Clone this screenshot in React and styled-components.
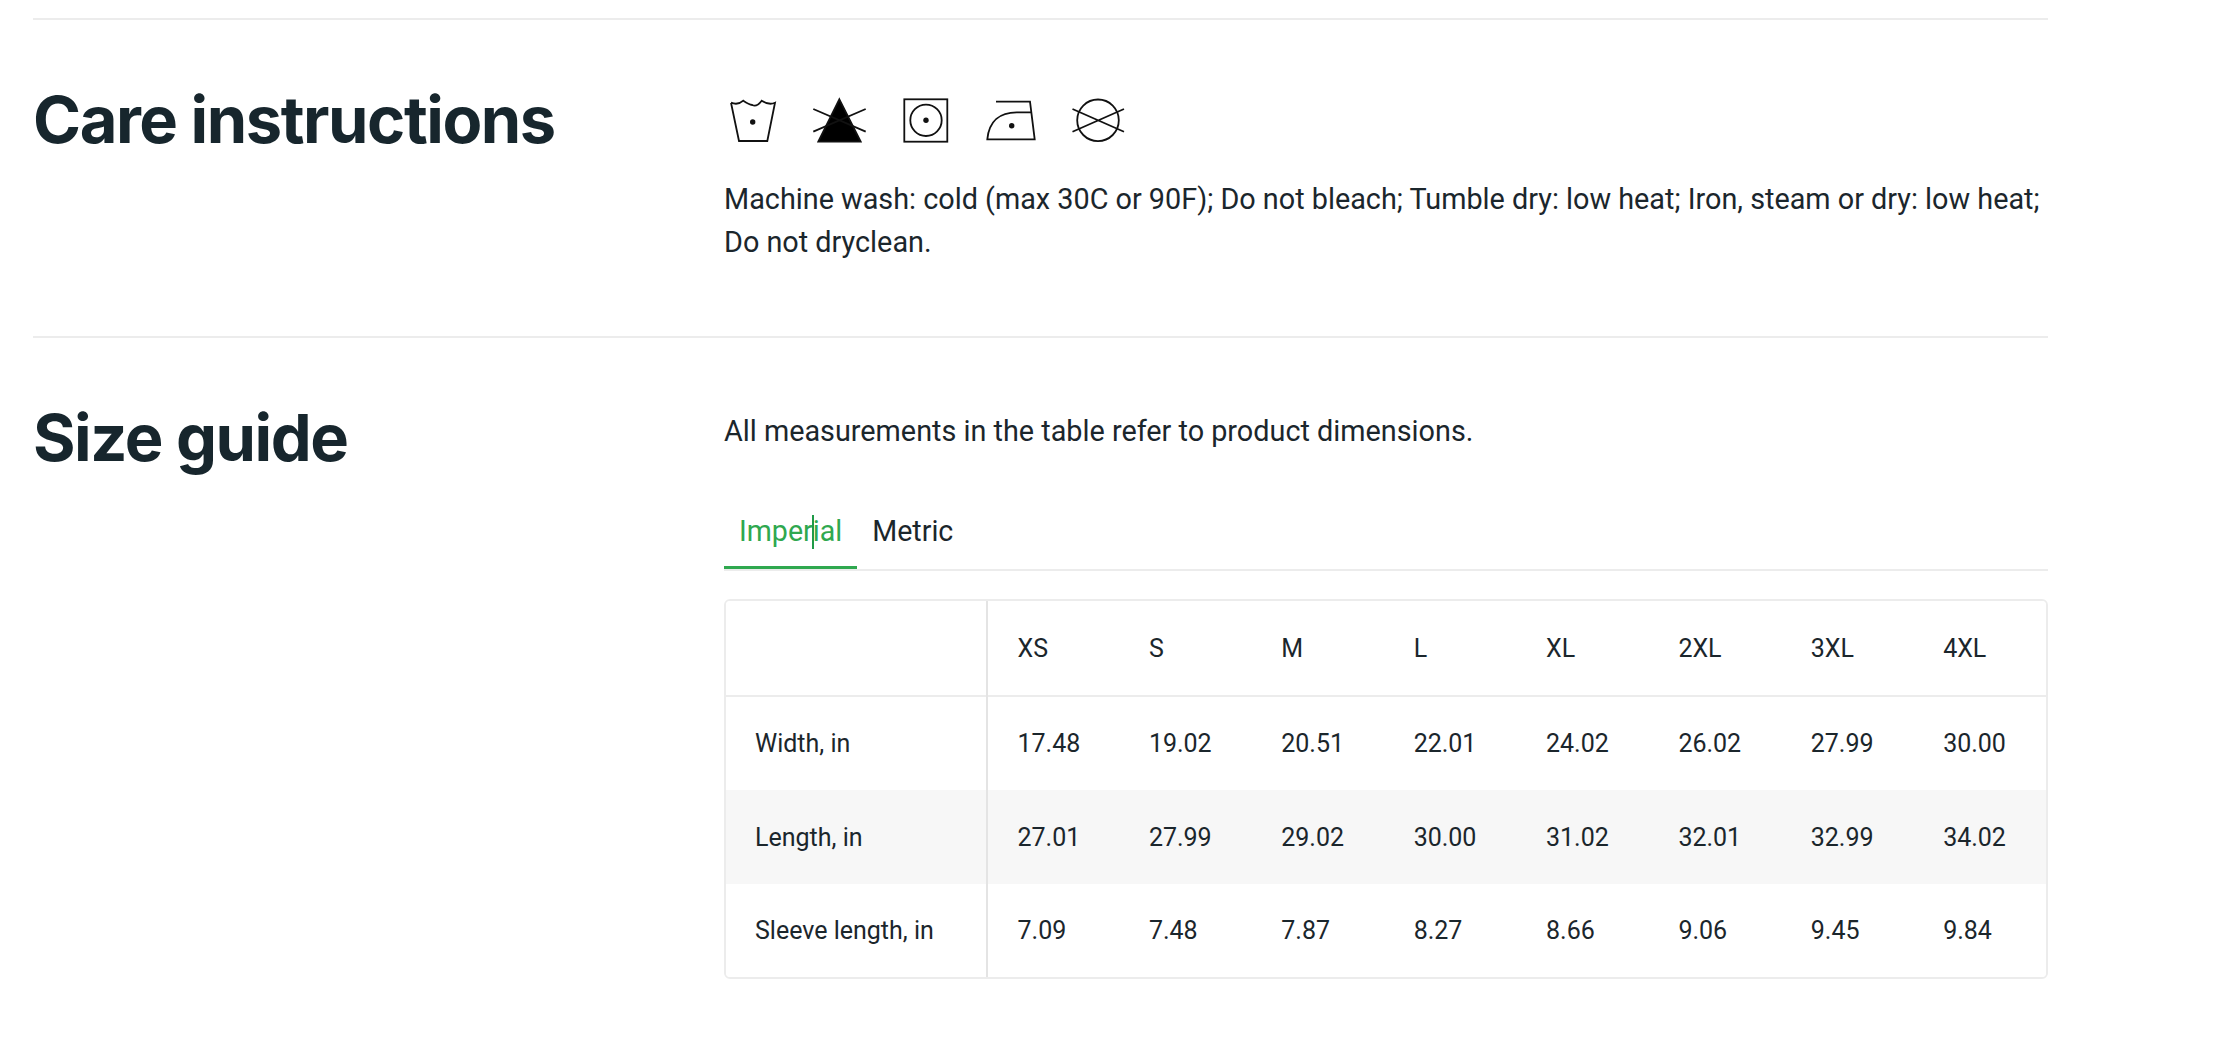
import React from "react";
import styled, { createGlobalStyle } from "styled-components";

const GlobalStyle = createGlobalStyle`
  html, body {
    margin: 0;
    background: #fff;
    font-family: Roboto, "Liberation Sans", sans-serif;
    color: #1b262c;
  }
`;

const Page = styled.div`
  width: 2015px;
  margin-left: 33px;
  padding-top: 18px;
`;

const Section = styled.section`
  display: grid;
  grid-template-columns: 691px 1324px;
  border-top: 2px solid #ececec;
  padding-top: 60px;
  height: ${(p) => p.$height}px;
  box-sizing: border-box;
`;

const Title = styled.h2`
  margin: 0;
  font-family: Inter, "Liberation Sans", sans-serif;
  font-size: 65px;
  line-height: 80px;
  font-weight: 700;
  letter-spacing: -1.45px;
  color: #17262d;
`;

const IconRow = styled.div`
  display: flex;
  gap: 26px;
  margin: 17px 0 0 -1px;
  height: 48px;
`;

const CareIcon = styled.svg`
  width: 60px;
  height: 48px;
  fill: none;
  stroke: #111;
  stroke-width: 1.8;
`;

const Dot = styled.circle`
  fill: #111;
  stroke: none;
`;

const Para = styled.p`
  margin: 0;
  font-size: 28.8px;
  line-height: 43px;
  color: #1b262c;
`;

const CareText = styled(Para)`
  margin-top: 33px;
`;

const Intro = styled(Para)`
  margin-top: 12px;
`;

const Tabs = styled.div`
  display: flex;
  margin-top: 44px;
  border-bottom: 2px solid #ececec;
  height: 72px;
`;

const Tab = styled.div`
  padding: 13px 15px 0;
  font-size: 28.6px;
  line-height: 42px;
  height: 72px;
  box-sizing: border-box;
  color: ${(p) => (p.$active ? "#2fa84f" : "#1b262c")};
  border-bottom: ${(p) => (p.$active ? "3px solid #2fa84f" : "none")};
`;

const Caret = styled.span`
  display: inline-block;
  width: 0;
  height: 34px;
  border-left: 2px solid #1f9a47;
  margin: 0 -1px;
  vertical-align: -8px;
`;

const TableWrap = styled.div`
  margin-top: 28px;
  border: 2px solid #ececec;
  border-radius: 6px;
  overflow: hidden;
`;

const Table = styled.table`
  width: 100%;
  table-layout: fixed;
  border-collapse: collapse;
  font-size: 25px;
  color: #1b262c;
`;

const Row = styled.tr`
  height: ${(p) => p.$height}px;
  background: ${(p) => (p.$shade ? "#f7f7f7" : "#fff")};
  border-bottom: ${(p) => (p.$head ? "2px solid #ececec" : "none")};
`;

const LabelCell = styled.td`
  width: 261px;
  box-sizing: border-box;
  padding: 0 0 0 29px;
  border-right: 2px solid #e4e4e4;
`;

const Cell = styled.td`
  padding: 0 0 0 29.5px;
`;

const sizes = ["XS", "S", "M", "L", "XL", "2XL", "3XL", "4XL"];
const rows = [
  { label: "Width, in", values: ["17.48", "19.02", "20.51", "22.01", "24.02", "26.02", "27.99", "30.00"], height: 94 },
  { label: "Length, in", values: ["27.01", "27.99", "29.02", "30.00", "31.02", "32.01", "32.99", "34.02"], height: 94, shade: true },
  { label: "Sleeve length, in", values: ["7.09", "7.48", "7.87", "8.27", "8.66", "9.06", "9.45", "9.84"], height: 93 },
];

const App = () => {
  return (
    <Page>
      <GlobalStyle />
      <Section $height={318}>
        <Title>Care instructions</Title>
        <div>
          <IconRow>
            <CareIcon viewBox="0 0 60 48">
              <path d="M8 5.7 L16 44 H44.3 L52 5.7 Q46 8.5 38.7 3.7 Q33.5 10.5 29.3 8 Q26 7.5 20.3 3.7 Q15 8.5 8 5.7" />
              <Dot cx="29.7" cy="25" r="2.7" />
            </CareIcon>
            <CareIcon viewBox="0 0 60 48">
              <path d="M30.3 2.3 L9.3 44.7 H51.7 Z" fill="#000" />
              <path d="M4.3 12 L56.7 34.7 M56.7 12 L4.3 34.7" />
            </CareIcon>
            <CareIcon viewBox="0 0 60 48">
              <rect x="9.3" y="2.3" width="43" height="42.4" />
              <circle cx="31" cy="23.3" r="15.7" />
              <Dot cx="31" cy="23.3" r="2.7" />
            </CareIcon>
            <CareIcon viewBox="0 0 60 48">
              <path d="M15 4.7 H49 L53.7 42.3 H6.3 C8 24 19 15.3 35.7 15.3 H50" />
              <Dot cx="30.7" cy="28.7" r="2.7" />
            </CareIcon>
            <CareIcon viewBox="0 0 60 48">
              <circle cx="31" cy="23.3" r="20.8" />
              <path d="M5.5 12 L57 34.7 M57 12 L5.5 34.7" />
            </CareIcon>
          </IconRow>
          <CareText>
            Machine wash: cold (max 30C or 90F); Do not bleach; Tumble dry: low heat; Iron, steam or dry: low heat;
            <br />
            Do not dryclean.
          </CareText>
        </div>
      </Section>
      <Section $height={700}>
        <Title>Size guide</Title>
        <div>
          <Intro>All measurements in the table refer to product dimensions.</Intro>
          <Tabs>
            <Tab $active>
              Imper
              <Caret />
              ial
            </Tab>
            <Tab>Metric</Tab>
          </Tabs>
          <TableWrap>
            <Table>
              <tbody>
                <Row $head $height={95}>
                  <LabelCell />
                  {sizes.map((s) => (
                    <Cell key={s}>{s}</Cell>
                  ))}
                </Row>
                {rows.map((r) => (
                  <Row key={r.label} $height={r.height} $shade={r.shade}>
                    <LabelCell>{r.label}</LabelCell>
                    {r.values.map((v, i) => (
                      <Cell key={i}>{v}</Cell>
                    ))}
                  </Row>
                ))}
              </tbody>
            </Table>
          </TableWrap>
        </div>
      </Section>
    </Page>
  );
};

export default App;
